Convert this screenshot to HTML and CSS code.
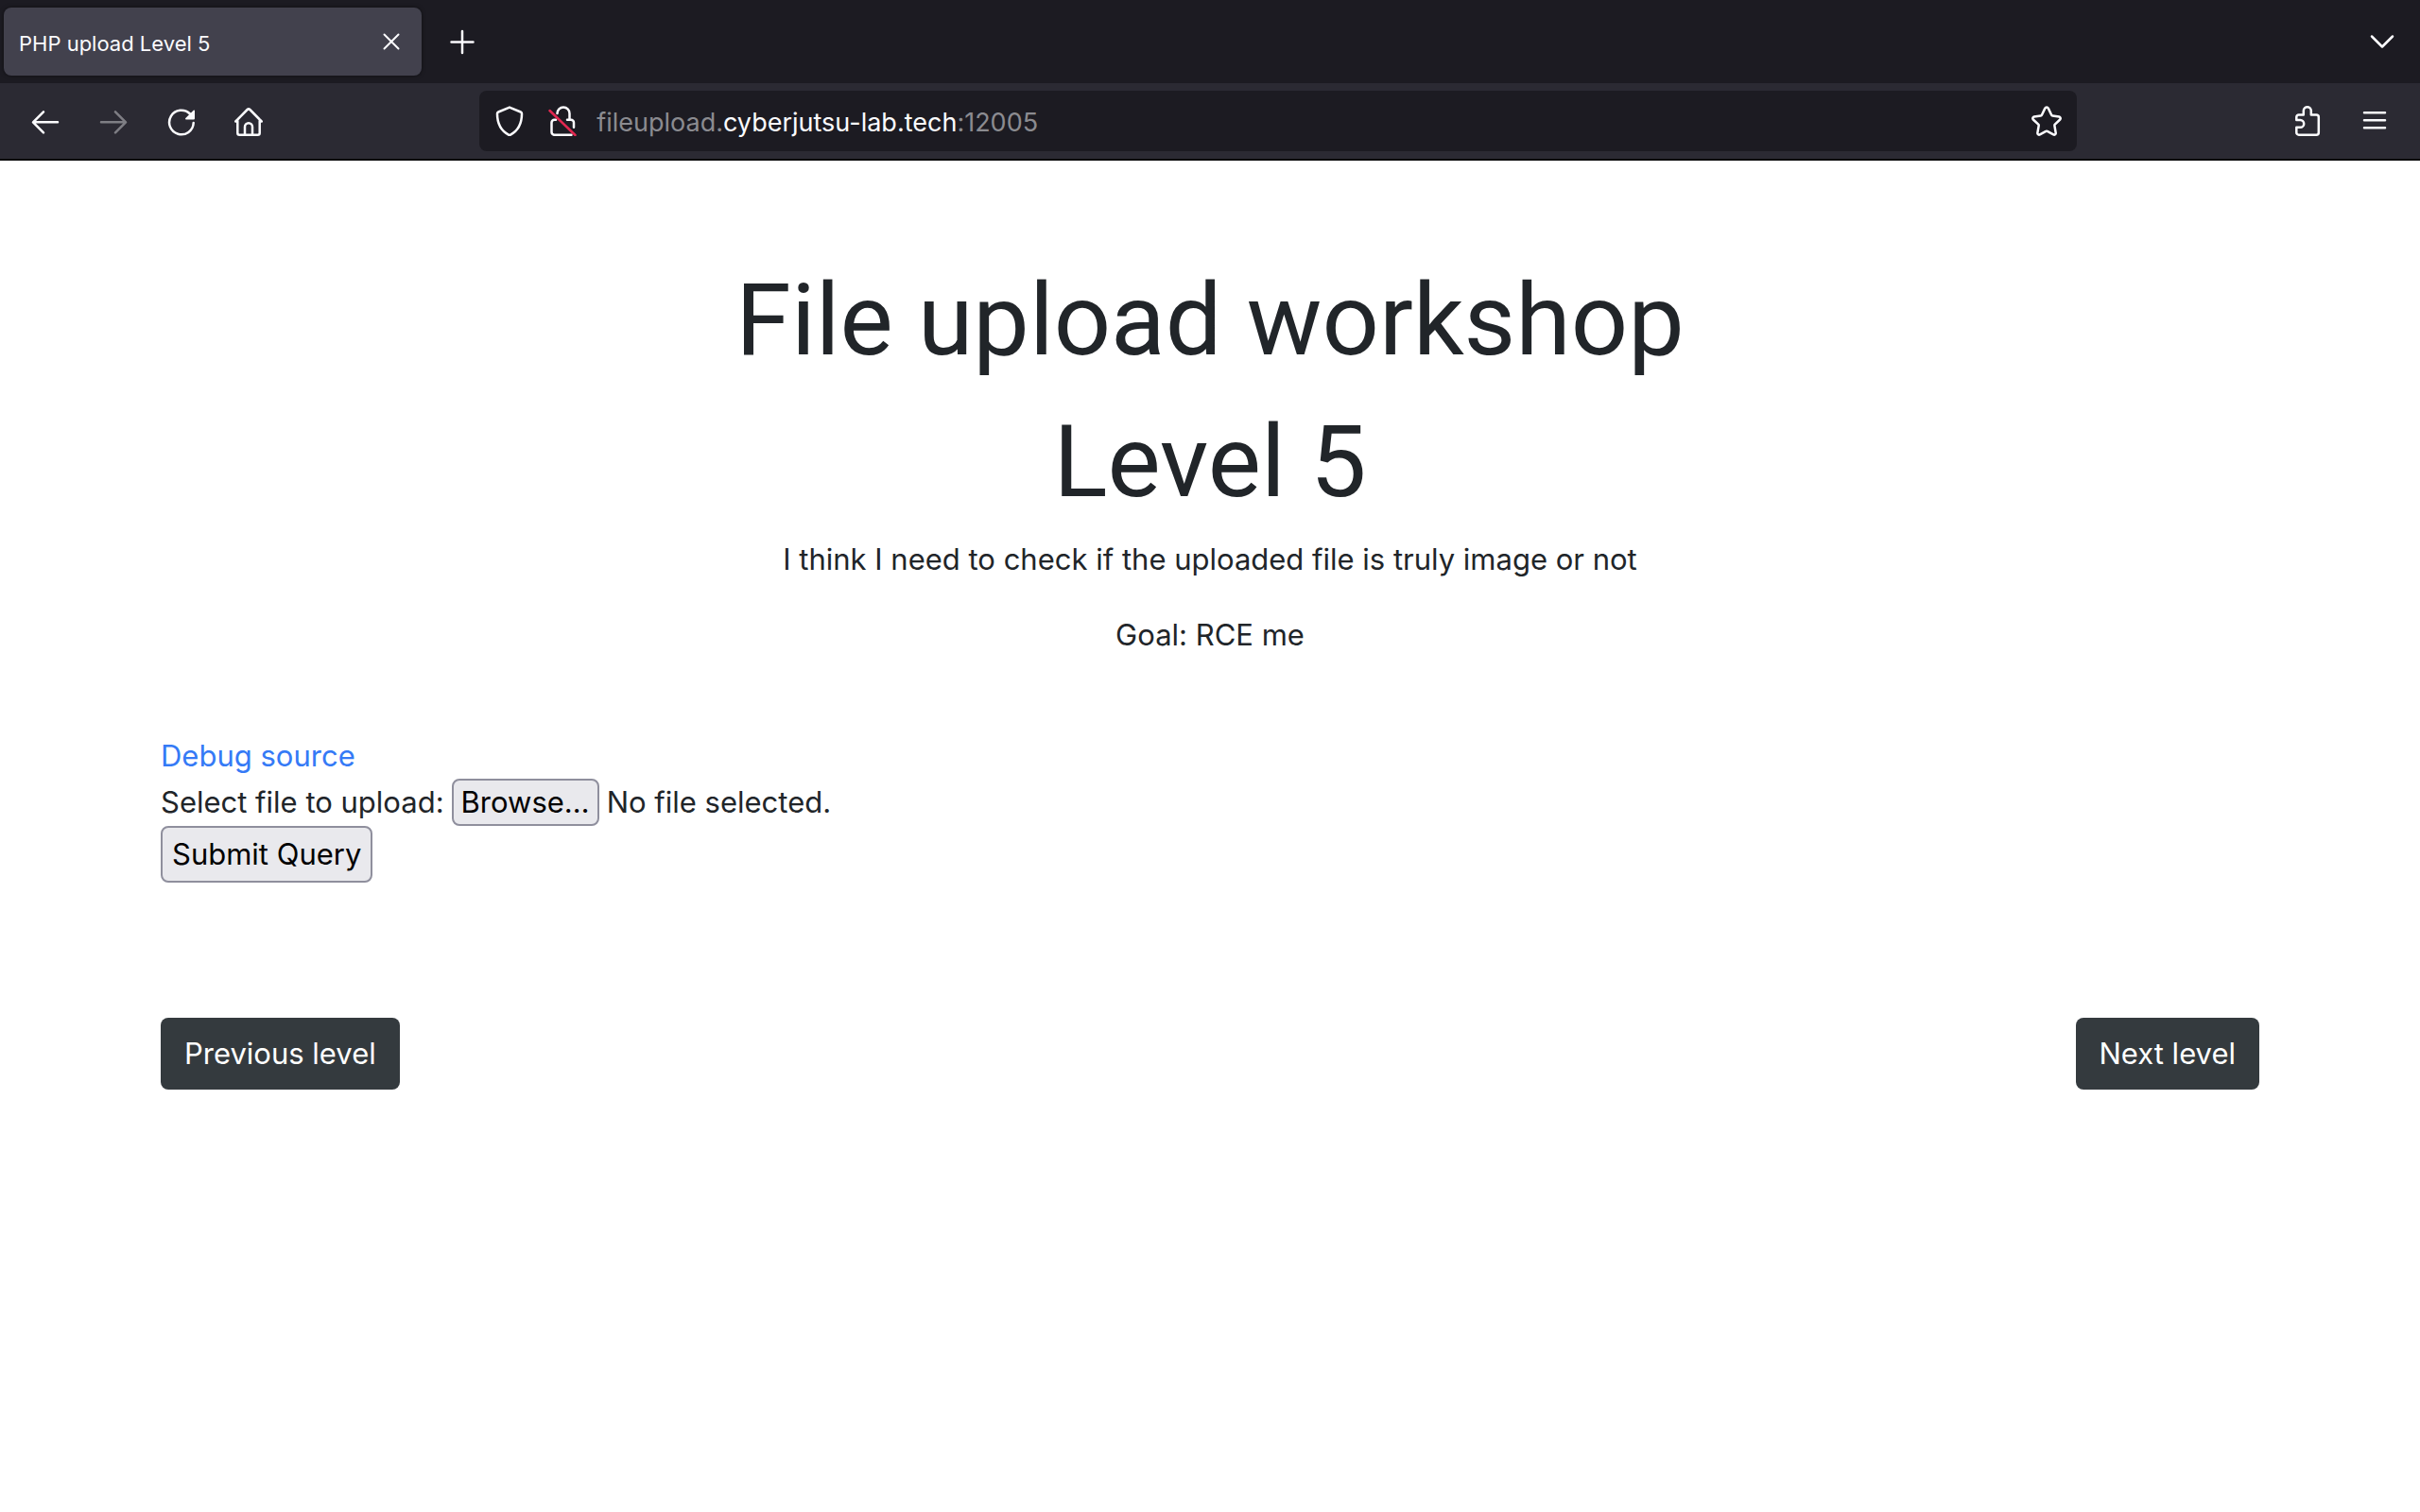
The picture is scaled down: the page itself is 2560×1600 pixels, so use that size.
FILE: index.html
```html
<!DOCTYPE html>
<html lang="en">
<head>
<meta charset="utf-8">
<title>PHP upload Level 5</title>
<link rel="stylesheet" href="styles.css">
</head>
<body>
<header class="browser">
  <div class="tabstrip">
    <div class="tab">
      <span class="tab-title">PHP upload Level 5</span>
      <button class="tab-close" type="button" aria-label="Close tab"><svg class="icon" viewBox="0 0 32 32"><path d="M8.500 8.500l15 15M23.500 8.500l-15 15"/></svg></button>
    </div>
    <button class="tool" type="button" aria-label="New tab"><svg class="icon" viewBox="0 0 32 32"><path d="M16 5v23M4.500 16.500h23"/></svg></button>
    <span class="spring"></span>
    <button class="tool" type="button" aria-label="List all tabs"><svg class="icon" viewBox="0 0 32 32"><path d="M5 10.500l11 11 11-11"/></svg></button>
  </div>
  <nav class="toolbar" aria-label="Navigation">
    <div class="tools">
      <button class="tool" type="button" aria-label="Back"><svg class="icon" viewBox="0 0 32 32"><path d="M29 17.300H3.500M14 6.300l-11 11 11 11"/></svg></button>
      <button class="tool" type="button" aria-label="Forward" disabled><svg class="icon" viewBox="0 0 32 32"><path d="M3 17.300h25.500M18 6.300l11 11-11 11"/></svg></button>
      <button class="tool" type="button" aria-label="Reload"><svg class="icon" viewBox="0 0 32 32"><path d="M28.700 18A12.800 12.800 0 1 1 25 8.500"/><path class="solid" d="M30 5.200v8.400a.8.800 0 0 1-.8.800h-8.400c-.8 0-1-.8-.5-1.300l8.400-8.400c.5-.5 1.300-.2 1.300.5z"/></svg></button>
      <button class="tool" type="button" aria-label="Home"><svg class="icon" viewBox="0 0 32 32"><path d="M1.300 16.500L13.600 4a2 2 0 0 1 2.800 0L28.700 16.500M3.300 14.500v14.200a2 2 0 0 0 2 2h19.400a2 2 0 0 0 2-2V14.500M11 30.500v-8.300a4 4 0 0 1 8 0v8.300"/></svg></button>
    </div>
    <div class="urlbar">
      <svg class="icon" viewBox="0 0 32 32"><path d="M16 1.600l11.800 4.900a2 2 0 0 1 1.200 2C29 18 26.500 25.500 17 30.600a2 2 0 0 1-2 0C5.500 25.500 3 18 3 8.500a2 2 0 0 1 1.200-2z"/></svg>
      <svg class="icon lock" viewBox="0 0 32 32"><path d="M10.500 7.500V8a6.500 6.500 0 0 1 13 0v6.500M9 14.800H7.500a3 3 0 0 0-3 3v10a3 3 0 0 0 3 3h18M21 14.800h4a3 3 0 0 1 3 3v5"/><path class="strike" d="M2.500 5l27 26"/></svg>
      <p class="url">fileupload.<strong>cyberjutsu-lab.tech</strong>:12005</p>
      <svg class="icon" viewBox="0 0 32 32"><path d="M17.800 2.600l3.400 7.200a1.500 1.500 0 0 0 1.100.8l7 1a1.700 1.700 0 0 1 .9 2.900l-5.400 5.200a1.500 1.500 0 0 0-.4 1.300l1.300 7.600a1.700 1.700 0 0 1-2.500 1.800l-6.400-3.500a1.500 1.500 0 0 0-1.500 0l-6.400 3.500a1.700 1.700 0 0 1-2.500-1.800l1.300-7.600a1.500 1.500 0 0 0-.4-1.300l-5.500-5.200a1.700 1.700 0 0 1 .9-2.900l7.100-1a1.500 1.500 0 0 0 1.100-.8l3.400-7.200a2 2 0 0 1 3.500 0z"/></svg>
    </div>
    <div class="tools">
      <button class="tool" type="button" aria-label="Extensions"><svg class="icon" viewBox="0 0 32 32"><path d="M5.300 15v-3a2.500 2.500 0 0 1 2.500-2.500h5V5.200a4 4 0 0 1 8 0v4.300h5.500a2.500 2.500 0 0 1 2.500 2.500v16.200a2.500 2.500 0 0 1-2.500 2.500H7.800a2.500 2.500 0 0 1-2.500-2.500v-5.400h4a3.900 3.900 0 0 0 0-7.800z"/></svg></button>
      <button class="tool" type="button" aria-label="Menu"><svg class="icon" viewBox="0 0 32 32"><path d="M5 7.200h22M5 15.200h22M5 23.200h22"/></svg></button>
    </div>
  </nav>
</header>
<main class="container">
  <div class="intro">
    <h1 class="display">File upload workshop</h1>
    <h1 class="display">Level 5</h1>
    <p>I think I need to check if the uploaded file is truly image or not</p>
    <p>Goal: RCE me</p>
  </div>
  <a class="link" href="#">Debug source</a>
  <form class="upload">
    <div class="file-row">
      <label for="file">Select file to upload:</label>
      <div class="picker">
        <button class="control browse" type="button" tabindex="-1">Browse…</button>
        <span>No file selected.</span>
        <input class="file" id="file" type="file">
      </div>
    </div>
    <button class="control submit" type="submit">Submit Query</button>
  </form>
  <div class="levels">
    <a class="btn" href="#">Previous level</a>
    <a class="btn" href="#">Next level</a>
  </div>
</main>
</body>
</html>
```
FILE: styles.css
```css
* { box-sizing: border-box; }
body {
  margin: 0;
  background: #fff;
  color: #212529;
  font: 400 31px/48px Inter, "Liberation Sans", sans-serif;
}
button, input { font: inherit; }
p, h1 { margin: 0; }

.browser {
  background: #2b2a33;
  border-bottom: 2px solid #0c0c0d;
  color: #fbfbfe;
}
.tabstrip {
  display: flex;
  align-items: center;
  height: 88px;
  padding: 0 8px 0 4px;
  gap: 11px;
  background: #1c1b22;
}
.tab {
  display: flex;
  align-items: center;
  justify-content: space-between;
  width: 442px;
  height: 72px;
  padding: 0 16px;
  border-radius: 8px;
  background: #42414d;
  box-shadow: 0 0 4px rgba(0, 0, 0, .5);
  font-size: 22px;
  line-height: 32px;
}
.tab-title { padding-top: 4px; }
.tab-close, .tool {
  display: flex;
  align-items: center;
  justify-content: center;
  height: 64px;
  padding: 0;
  border: 0;
  background: none;
  color: inherit;
}
.tab-close { width: 32px; }
.tool { width: 64px; }
.tool:disabled { opacity: .4; }
.spring { flex: 1; }
.icon {
  display: block;
  width: 32px;
  height: 32px;
  flex: none;
  fill: none;
  stroke: currentColor;
  stroke-width: 2.500;
  stroke-linecap: round;
  stroke-linejoin: round;
}
.tab-close .icon { stroke-width: 2; }
.solid { fill: currentColor; stroke: none; }
.strike { stroke: #e22850; }

.toolbar {
  display: grid;
  grid-template-columns: auto 1fr 8fr 1fr auto;
  align-items: center;
  height: 80px;
  padding: 0 16px;
}
.tools { display: flex; gap: 8px; }
.tools:last-child { grid-column: 5; }
.urlbar {
  grid-column: 3;
  display: flex;
  align-items: center;
  height: 64px;
  padding: 0 16px;
  border-radius: 8px;
  background: #1c1b22;
}
.lock { margin: 0 20px 0 24px; }
.url {
  flex: 1;
  padding-top: 3px;
  color: #8b8b90;
  font-size: 27px;
}
.url strong { color: #fbfbfe; font-weight: 400; }

.container {
  max-width: 2280px;
  margin: 0 auto;
  padding: 102px 30px;
}
.intro {
  display: flex;
  flex-direction: column;
  gap: 16px;
  text-align: center;
}
.intro p + p { margin-top: 16px; }
.display {
  font-family: Roboto, Inter, sans-serif;
  font-size: 106px;
  font-weight: 400;
  line-height: 134px;
}
.display + p { margin-top: -4px; }
.link { color: #357af6; text-decoration: none; }
.intro + .link { display: block; width: max-content; margin-top: 80px; }
.file-row, .picker { display: flex; align-items: center; }
.file-row { gap: 8px; }
.picker { position: relative; gap: 8px; }
.file { position: absolute; inset: 0; width: 100%; opacity: 0; }
.control {
  display: block;
  border: 2px solid #8f8f9d;
  border-radius: 8px;
  background: #e9e9ed;
  color: #000;
}
.browse { height: 50px; padding: 0 8px; line-height: 46px; }
.submit { height: 60px; padding: 0 10px; }
.levels {
  display: flex;
  justify-content: space-between;
  margin-top: 143px;
}
.btn {
  padding: 14px 25px;
  border-radius: 8px;
  background: #343a3e;
  color: #fff;
  text-decoration: none;
}
```
